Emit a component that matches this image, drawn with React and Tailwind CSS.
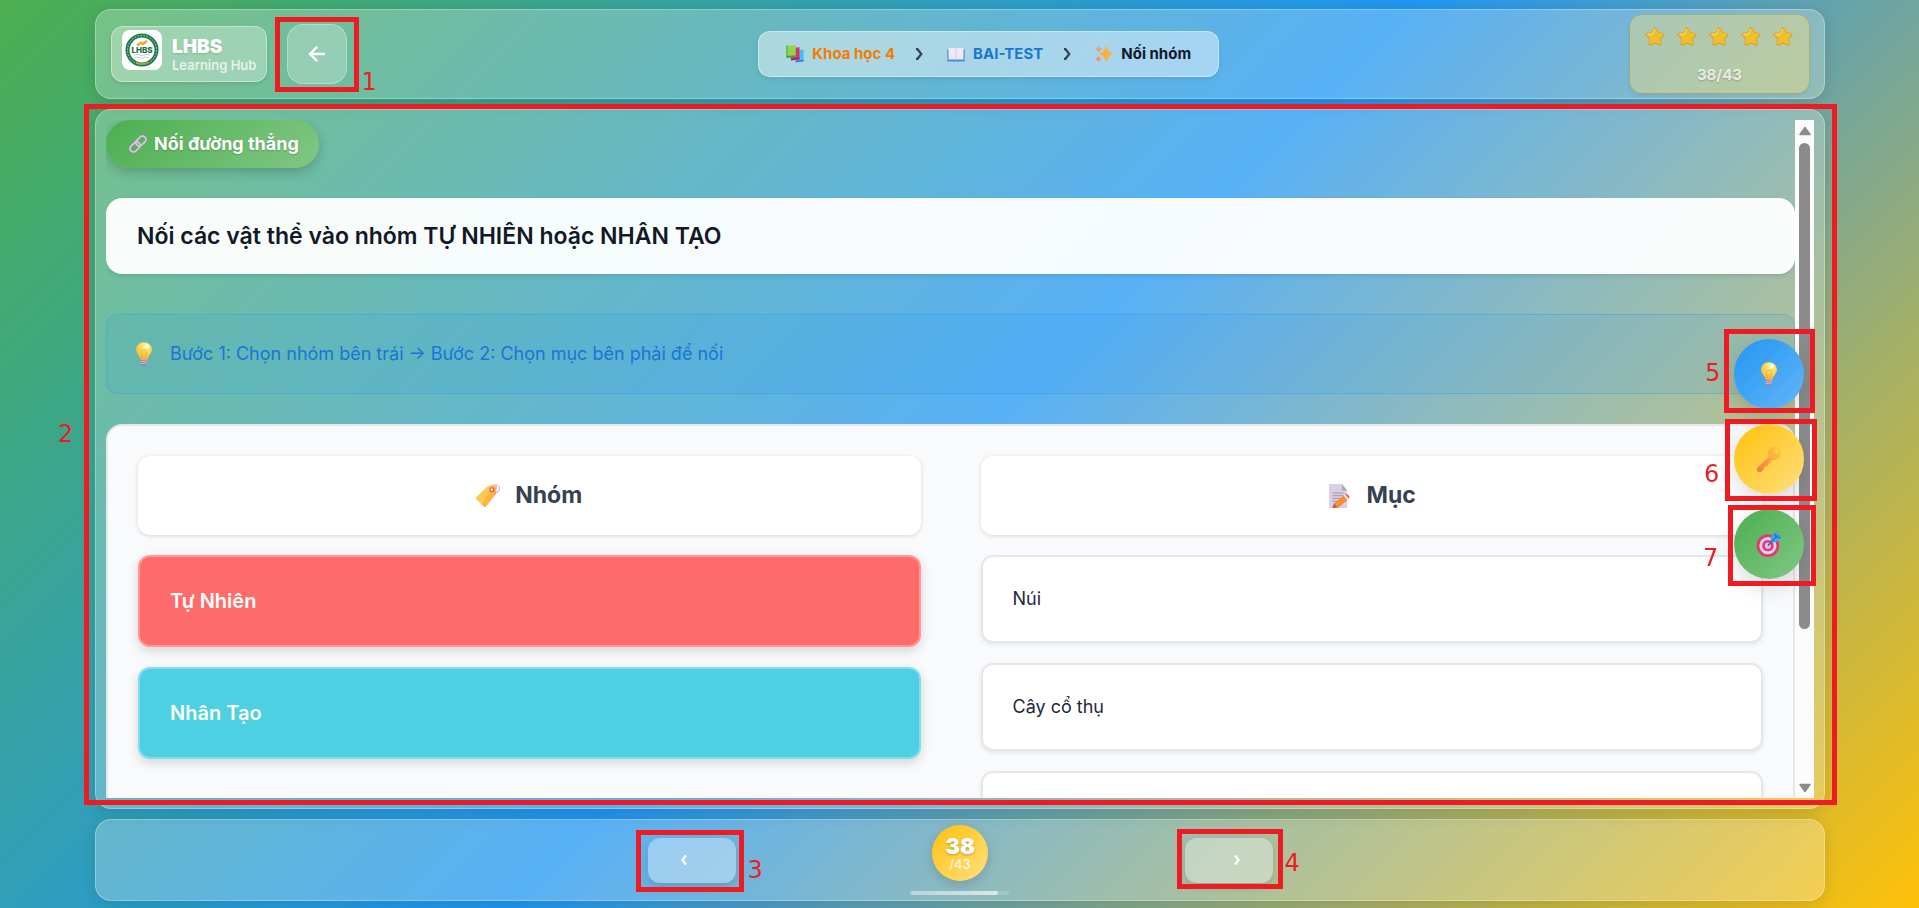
const glass = "border border-white/30 bg-white/25 rounded-[16px] shadow-[0_4px_16px_rgba(0,0,0,0.12)]";

function Mark({ box, label, n }) {
  return (
    <span aria-hidden="true" className={"pointer-events-none absolute z-20 border-[5px] border-[#ed1c24] " + box}>
      <span className={"absolute font-['DejaVu_Sans',sans-serif] text-2xl leading-6 font-normal text-[#ed1c24] " + label}>{n}</span>
    </span>
  );
}

const Bulb = ({ className }) => (
  <svg viewBox="0 0 24 24" className={className} aria-hidden="true">
    <defs>
      <radialGradient id="bulb" cx="0.6" cy="0.25" r="0.8">
        <stop offset="0" stopColor="#fff6b0" />
        <stop offset="0.5" stopColor="#ffd54a" />
        <stop offset="1" stopColor="#f9a63a" />
      </radialGradient>
    </defs>
    <path d="M12 0.3c-4.700 0-7.900 3.300-7.900 7.400 0 3.500 2.600 5.300 3.700 7.600.5 1 .7 2 1.100 3h6.200c.4-1 .6-2 1.100-3 1.100-2.300 3.700-4.100 3.700-7.600 0-4.100-3.200-7.400-7.900-7.400z" fill="url(#bulb)" />
    <path d="M11 18l-1.500-7c-.5-2 1-3 2.500-3s3 1 2.500 3L13 18" fill="none" stroke="#f3a62f" strokeWidth="0.9" />
    <ellipse cx="15.300" cy="4.400" rx="1.800" ry="2.200" fill="#fffbe8" transform="rotate(-25 15.300 4.400)" />
    <path d="M8.800 18.200h6.400v3.500l-1.500 2h-3.400l-1.500-2z" fill="#9f7fae" />
    <path d="M8.800 19.600l6.400-.6M8.800 21.600l6.400-.6" stroke="#dcc8e6" strokeWidth="0.8" />
  </svg>
);

const Star = () => (
  <svg viewBox="0 0 24 24" className="size-5" aria-hidden="true">
    <path d="M12 2.400l2.900 6 6.500.9-4.700 4.600 1.100 6.500L12 17.300l-5.800 3.100 1.100-6.500-4.700-4.600 6.500-.9z" fill="#d99f2b" stroke="#d99f2b" strokeWidth="4" strokeLinejoin="round" />
    <path d="M12 2.600l2.700 5.700 6.200.8-4.500 4.300 1.100 6.200L12 16.600l-5.500 3 1.100-6.200-4.500-4.300 6.200-.8z" fill="#efc02c" stroke="#efc02c" strokeWidth="2.600" strokeLinejoin="round" />
    <path d="M11 3.500l-2.300 5-5.500 1" fill="none" stroke="#f7d760" strokeWidth="1.400" strokeLinecap="round" />
  </svg>
);

const Books = () => (
  <svg viewBox="0 0 24 24" className="size-[18px]" aria-hidden="true">
    <path d="M12 7l11.500-1v15.500L13 22.500z" fill="#45c0f5" />
    <path d="M13 20.500l10.500-1v2.300L13 23.200z" fill="#2f7fd6" />
    <path d="M6 4l12-1v16L7 20z" fill="#e0316b" />
    <path d="M6 17.500l12-1V19L7 20.600z" fill="#a8285a" />
    <path d="M0.500 1l12.500-.6v14.600L1.500 16z" fill="#92d650" />
    <path d="M0.500 1l1.600 0v14.500l-1.600.5z" fill="#5aa83f" />
    <path d="M0.500 14.500l12.500-1v2.300L1 17.200z" fill="#4a9a3c" />
  </svg>
);

const OpenBook = () => (
  <svg viewBox="0 0 24 24" className="size-[18px]" aria-hidden="true">
    <path d="M0.500 6h23v16h-23z" fill="#3f8ede" />
    <path d="M2 4h9.500l.5 1 .5-1H22v15H2z" fill="#efeaf6" />
    <path d="M12 5v14" stroke="#c7bdd6" strokeWidth="1" />
    <path d="M2 19h9l1 1 1-1h9" fill="none" stroke="#b9d4f2" strokeWidth="1" />
  </svg>
);

const Sparkles = () => (
  <svg viewBox="0 0 24 24" className="size-[18px]" aria-hidden="true">
    <path d="M15 2c1.200 5.500 2.800 8 8.500 10-5.700 2-7.300 4.500-8.500 10-1.200-5.500-2.800-8-8.500-10C12.200 10 13.800 7.500 15 2z" fill="#ffb13d" stroke="#ffb13d" strokeWidth="1.500" strokeLinejoin="round" />
    <path d="M5 1.500c.6 2.400 1.300 3.200 3.800 4-2.500.8-3.200 1.600-3.800 4-.6-2.400-1.300-3.200-3.800-4 2.500-.8 3.200-1.600 3.800-4z" fill="#ff9a5a" stroke="#ff9a5a" />
    <path d="M4.500 15c.6 2.200 1.200 3 3.500 3.700-2.300.7-2.900 1.500-3.500 3.700-.6-2.200-1.200-3-3.500-3.700 2.300-.7 2.900-1.500 3.500-3.700z" fill="#ff8a66" stroke="#ff8a66" />
  </svg>
);

const Link = () => (
  <svg viewBox="0 0 24 24" className="size-[18px]" aria-hidden="true" fill="none">
    <g transform="rotate(-45 12 12)">
      <rect x="-1" y="7.500" width="15" height="9" rx="4.500" stroke="#a88bb8" strokeWidth="3" />
      <rect x="10" y="7.500" width="15" height="9" rx="4.500" stroke="#a88bb8" strokeWidth="3" />
      <rect x="-1" y="7.500" width="15" height="9" rx="4.500" stroke="#dccbe6" strokeWidth="1.900" />
      <rect x="10" y="7.500" width="15" height="9" rx="4.500" stroke="#dccbe6" strokeWidth="1.900" />
    </g>
  </svg>
);

const Tag = () => (
  <svg viewBox="0 0 24 24" className="size-6" aria-hidden="true">
    <path d="M11 3l5-2 5 1.500L20 10 10 22.500c-.7.700-1.600.7-2.300 0L0.800 15.200c-.6-.7-.6-1.500 0-2.200z" fill="#ffb33f" />
    <path d="M11 3l5-2 3.500 1L12 11 6 20.500l-5.200-5.300c-.6-.7-.6-1.500 0-2.200z" fill="#ffc94f" />
    <rect x="14" y="3.800" width="3.600" height="3.600" rx="1" fill="#fff" stroke="#e2554a" strokeWidth="1.300" />
    <path d="M16.500 3c1-3 6-3 6.800.5.500 4-2.300 6-5.300 5" fill="none" stroke="#b9a3cc" strokeWidth="1" />
  </svg>
);

const Memo = () => (
  <svg viewBox="0 0 24 24" className="size-6" aria-hidden="true">
    <path d="M1 0h13l5 6v18H1z" fill="#d9cfe2" />
    <path d="M14 0l5 6.500h-5z" fill="#b3a4c0" />
    <path d="M4.500 9h11M4.500 11.700h11M4.500 14.400h9M4.500 17.100h6" stroke="#a095ad" strokeWidth="1" />
    <path d="M6 19.500L15.500 11.500l4 4.500L10.500 23.500 4.500 24z" fill="#fb8c34" />
    <path d="M6 19.500l-1.500 4.500 5-.5z" fill="#a7624a" />
    <path d="M15.500 11.500l1.500-1.200 4 4.500-1.500 1.200z" fill="#efe6f2" />
    <path d="M17 10.300c2-1.500 5.800 2.300 4 4.500z" fill="#f4544f" />
  </svg>
);

const Key = () => (
  <svg viewBox="0 0 24 24" className="size-[26px]" aria-hidden="true">
    <defs>
      <linearGradient id="key" x1="1" y1="0" x2="0" y2="1">
        <stop offset="0" stopColor="#ffcf3a" />
        <stop offset="1" stopColor="#f07f3f" />
      </linearGradient>
    </defs>
    <path fillRule="evenodd" d="M13 1.500c2.500-2 7-1.300 9 1.500 2 3 1.200 6.700-1.300 8.700-1.700 1.300-4 1.500-5.800 1L14 14l-.5 2-2 .4-.5 2-2 .4L5.500 23.200c-1.300 1.300-3.800 1-4.500-.4-.5-1-.2-2.300.6-3.100l9.900-9.500c-.9-3.300-.5-7 1.500-8.700zM20 3.500a2 2 0 1 0 .1 3.200 2 2 0 0 0-.1-3.200z" fill="url(#key)" />
    <path d="M3.500 20.500l9-8.700" stroke="#e98b3e" strokeWidth="0.900" />
  </svg>
);

const Dart = () => (
  <svg viewBox="0 0 24 24" className="size-[26px]" aria-hidden="true">
    <circle cx="11" cy="13.500" r="10.500" fill="#e33a6c" />
    <circle cx="11" cy="13.500" r="7.900" fill="#e3cfea" />
    <circle cx="11" cy="13.500" r="5.300" fill="#d93a72" />
    <circle cx="11" cy="13.500" r="2.900" fill="#d9c6e6" />
    <path d="M11 13.500l5-5" stroke="#6b4a94" strokeWidth="1.400" />
    <path d="M13.500 10.500v-4.500L19 0l1.200 3.300 3.800 1.500-5.500 5.500z" fill="#3ea4f2" />
    <path d="M14 10l6.200-6.200M17 2l1.500 3.500 4.500 1" stroke="#1f6fd0" strokeWidth="1" fill="none" />
  </svg>
);

const Logo = () => (
  <svg viewBox="0 0 40 40" className="size-10 shrink-0 rounded-lg bg-white" role="img" aria-label="LHBS">
    <circle cx="20" cy="20" r="14.500" fill="#fff" stroke="#217a4b" strokeWidth="4" />
    <circle cx="20" cy="20" r="14.500" fill="none" stroke="#b9dcc6" strokeWidth="1" strokeDasharray="1.500 1.500" pathLength="90" />
    <path d="M14 32.500q6 3 12 0" stroke="#b4a02c" strokeWidth="1.500" fill="none" />
    <path d="M15 15.500l4-3 2 1.500 4-3" stroke="#eda32d" strokeWidth="2.200" fill="none" />
    <text x="20" y="22.500" textAnchor="middle" fontSize="8" fontWeight="800" fill="#1c6b43" fontFamily="Inter, sans-serif">LHBS</text>
    <path d="M12 25q4-2 8 1q4-3 8-1M13 27.500q4-1.500 7 1q3-2.500 7-1" stroke="#b7c4bd" strokeWidth="0.800" fill="none" />
  </svg>
);

const Chevron = ({ className, d, w }) => (
  <svg viewBox="0 0 8 12" className={className} fill="none" aria-hidden="true">
    <path d={d} stroke="currentColor" strokeWidth={w} />
  </svg>
);

const Separator = () => <Chevron className="h-3 w-2 text-[#374151]" d="M1 1.200h1.500L6.300 6l-3.800 4.800H1" w="2.200" />;

function Header() {
  return (
    <header className={"flex min-h-[90px] items-center justify-between px-[15px] " + glass}>
      <div className="flex items-center gap-5">
        <a href="#home" className="flex h-14 items-start gap-2.5 rounded-xl border border-white/40 bg-white/30 px-[10px] pt-[3px] shadow-[0_2px_4px_rgba(0,0,0,0.1)]">
          <Logo />
          <span className="flex flex-col pt-[7px]">
            <span className="text-[19px] leading-[20px] font-black text-white [text-shadow:0_1px_2px_rgba(0,0,0,0.15)]">LHBS</span>
            <span className="text-[13px] leading-[16px] font-semibold text-white/75">Learning Hub</span>
          </span>
        </a>
        <div className="relative">
          <button type="button" aria-label="Quay lại" className="flex size-[60px] items-center justify-center rounded-[16px] border border-white/30 bg-white/25 text-white">
            <svg viewBox="0 0 18 18" className="size-[18px]" fill="none" stroke="currentColor" strokeWidth="2.400" strokeLinecap="round" strokeLinejoin="round">
              <path d="M16 9H2.500M8.500 2.500L2 9l6.500 6.500" />
            </svg>
          </button>
          <Mark box="-left-3 -top-[7px] h-[75px] w-[84px]" label="left-[81px] top-[48px]" n="1" />
        </div>
      </div>
      <nav aria-label="Breadcrumb" className="flex h-[46px] items-center rounded-xl border border-white/40 bg-white/45 px-[27px] text-[15px] font-bold shadow-[0_2px_4px_rgba(0,0,0,0.08)]">
        <a href="#course" className="flex items-center gap-2 text-[#f57c00]"><Books />Khoa học 4</a>
        <span className="px-5"><Separator /></span>
        <a href="#lesson" className="flex items-center gap-2 pl-1 text-[#1976d2]"><OpenBook />BAI-TEST</a>
        <span className="px-5"><Separator /></span>
        <span className="flex items-center gap-2 pl-1 text-[#111827]"><Sparkles />Nối nhóm</span>
      </nav>
      <div className="flex h-[78px] w-[179px] flex-col items-center rounded-xl border border-[#ffc107]/40 bg-[#f9e37d]/40 pt-[11px] shadow-[0_2px_4px_rgba(0,0,0,0.08)]">
        <div className="flex gap-3" role="img" aria-label="5 sao"><Star /><Star /><Star /><Star /><Star /></div>
        <span className="mt-4 text-[15px] leading-6 font-bold text-white/75 [text-shadow:0_1px_2px_rgba(0,0,0,0.2)]">38/43</span>
      </div>
    </header>
  );
}

const columnTitle = "flex h-[79px] items-center justify-center gap-[15px] rounded-xl bg-white text-[23px] font-bold text-[#374151] shadow-[0_1px_4px_rgba(0,0,0,0.14)]";
const groupButton = "h-[92px] w-full rounded-xl border-2 border-white/30 px-[30px] text-left text-xl font-semibold text-white shadow-[0_4px_12px_rgba(0,0,0,0.15)] ";
const items = [
  { id: 1, text: "Núi" },
  { id: 2, text: "Cây cổ thụ" },
  { id: 3, text: "" },
];

function Exercise() {
  return (
    <main className={"relative flex min-h-0 flex-1 p-2.5 " + glass}>
      <div className="flex min-w-0 flex-1 flex-col overflow-hidden">
        <h1 className="flex h-12 shrink-0 items-center gap-[7px] self-start rounded-full bg-[linear-gradient(135deg,#4caf50,#81c784)] px-5 pl-[23px] text-lg font-bold text-white shadow-[0_4px_12px_rgba(0,0,0,0.2)] [text-shadow:0_1px_2px_rgba(0,0,0,0.2)]">
          <Link />Nối đường thẳng
        </h1>
        <h2 className="mt-[30px] flex h-[76px] shrink-0 items-center rounded-[16px] bg-white/95 px-[31px] text-[23px] font-semibold text-[#111827] shadow-[0_2px_4px_rgba(0,0,0,0.1)]">
          Nối các vật thể vào nhóm TỰ NHIÊN hoặc NHÂN TẠO
        </h2>
        <p className="mt-10 flex h-20 shrink-0 items-center gap-[14px] rounded-xl border border-[#2196f3]/30 bg-[#2196f3]/10 px-[25px] text-lg font-normal text-[#1976d2]">
          <Bulb className="size-6" />Bước 1: Chọn nhóm bên trái → Bước 2: Chọn mục bên phải để nối
        </p>
        <div className="mt-[30px] grid shrink-0 grid-cols-2 gap-[60px] rounded-[16px] border-2 border-[#e5e7eb] bg-[#f9fafc] p-[30px]">
          <section className="flex flex-col gap-5">
            <h3 className={columnTitle}><Tag />Nhóm</h3>
            <button type="button" className={groupButton + "bg-[#ff6b6b]"}>Tự Nhiên</button>
            <button type="button" className={groupButton + "bg-[#4dd0e1]"}>Nhân Tạo</button>
          </section>
          <section className="flex flex-col gap-5">
            <h3 className={columnTitle}><Memo />Mục</h3>
            {items.map(({ id, text }) => (
              <button key={id} type="button" aria-label={text || "Mục " + id} className="h-[88px] w-full rounded-xl border-2 border-[#e5e7eb] bg-white px-[30px] text-left text-lg font-normal text-[#1f2937] shadow-[0_2px_4px_rgba(0,0,0,0.08)]">{text}</button>
            ))}
          </section>
        </div>
      </div>
      <div aria-hidden="true" className="flex w-[19px] shrink-0 flex-col items-center bg-[#fcfcfc] pt-1.5 pb-[5px] text-[#8b8b8b]">
        <svg viewBox="0 0 12 10" className="h-2.5 w-3"><path d="M6 1.500L11 8.500H1z" fill="currentColor" stroke="currentColor" strokeWidth="1.500" strokeLinejoin="round" /></svg>
        <div className="mt-[7px] flex w-[11px] flex-1 flex-col"><div className="h-[76%] rounded-full bg-[#8b8b8b]" /></div>
        <svg viewBox="0 0 12 10" className="h-2.5 w-3"><path d="M6 8.500L11 1.500H1z" fill="currentColor" stroke="currentColor" strokeWidth="1.500" strokeLinejoin="round" /></svg>
      </div>
      <Mark box="-left-3 -top-1.5 -right-[13px] bottom-[3px]" label="-left-[31px] top-[313px]" n="2" />
    </main>
  );
}

const navButton = "flex h-[45px] w-[88px] items-center justify-center rounded-xl bg-white/35 text-white shadow-[0_4px_8px_rgba(0,0,0,0.12)] ";

function Footer() {
  return (
    <footer className={"flex min-h-[82px] items-center justify-center " + glass}>
      <div className="flex w-[625px] items-center justify-between">
        <div className="relative">
          <button type="button" aria-label="Câu trước" className={navButton + "pr-4"}>
            <Chevron className="h-3 w-2" d="M6 1.500L2.500 6L6 10.500" w="2.500" />
          </button>
          <Mark box="-left-3 -top-2 h-[62px] w-[108px]" label="left-[107px] top-[23px]" n="3" />
        </div>
        <div className="flex flex-col items-center gap-2.5">
          <div className="flex size-14 flex-col items-center justify-center rounded-full bg-[linear-gradient(135deg,#ffc107,#ffe082)] text-white shadow-[0_4px_12px_rgba(0,0,0,0.15)]">
            <span className="text-[22px] leading-[22px] font-black [text-shadow:0_1px_3px_rgba(0,0,0,0.25)]">38</span>
            <span className="text-[13px] leading-[14px] font-medium text-white/80">/43</span>
          </div>
          <div role="progressbar" aria-valuenow={38} aria-valuemax={43} aria-label="Tiến độ" className="h-1 w-[100px] overflow-hidden rounded-full bg-white/15">
            <div className="h-full w-[88%] rounded-full bg-linear-to-r from-white/30 to-white/60" />
          </div>
        </div>
        <div className="relative">
          <button type="button" aria-label="Câu sau" className={navButton + "pl-4"}>
            <Chevron className="h-3 w-2" d="M2 1.500L5.500 6L2 10.500" w="2.500" />
          </button>
          <Mark box="-left-2 -top-[9px] h-[60px] w-[106px]" label="left-[103px] top-[17px]" n="4" />
        </div>
      </div>
    </footer>
  );
}

const round = "flex size-[70px] items-center justify-center rounded-full shadow-[0_8px_24px_rgba(0,0,0,0.15)] ";

function Tools() {
  return (
    <aside className="fixed top-[339px] right-[115px] z-10 flex flex-col gap-[15px]">
      <div className="relative">
        <button type="button" aria-label="Gợi ý" className={round + "bg-[linear-gradient(135deg,#2196f3,#64b5f6)]"}><Bulb className="size-6" /></button>
        <Mark box="-left-2.5 -top-2.5 h-[84px] w-[91px]" label="-left-6 top-[27px]" n="5" />
      </div>
      <div className="relative">
        <button type="button" aria-label="Đáp án" className={round + "bg-[linear-gradient(135deg,#ffc107,#ffe082)]"}><Key /></button>
        <Mark box="-left-[9px] -top-[5px] h-[82px] w-[92px]" label="-left-[26px] top-[38px]" n="6" />
      </div>
      <div className="relative">
        <button type="button" aria-label="Mục tiêu" className={round + "bg-[linear-gradient(135deg,#4caf50,#81c784)]"}><Dart /></button>
        <Mark box="-left-1.5 -top-1 h-[81px] w-[88px]" label="-left-[30px] top-[36px]" n="7" />
      </div>
    </aside>
  );
}

export default function App() {
  return (
    <div className="flex h-screen flex-col gap-2.5 overflow-hidden bg-[linear-gradient(135deg,#4caf50_0%,#2196f3_50%,#ffc107_100%)] pt-[9px] pr-[94px] pb-[7px] pl-[95px] font-['Inter',sans-serif]">
      <Header />
      <Exercise />
      <Footer />
      <Tools />
    </div>
  );
}
